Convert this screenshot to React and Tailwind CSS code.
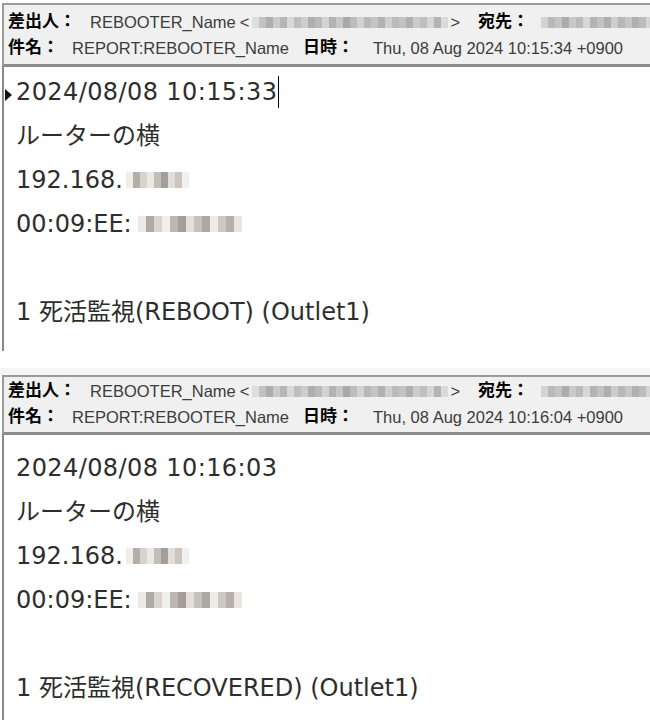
import React from 'react';

const HEAD_FONT = { fontFamily: '"Liberation Sans", "Noto Sans CJK JP", sans-serif' };
const BODY_FONT = { fontFamily: '"DejaVu Sans", "Noto Sans CJK JP", sans-serif' };

// pixelated blur blocks standing in for hidden text
function Mosaic({ shades, cell = 'w-[7px]', height = 'h-[10px]', className = '' }) {
  return (
    <span className={`inline-flex items-center ${className}`}>
      {shades.map((s, i) => (
        <span key={i} className={`${cell} ${height}`} style={{ backgroundColor: s }} />
      ))}
    </span>
  );
}

const headMask1 = ['#dedede', '#c2c2c2', '#adadad', '#cbcbcb', '#b6b6b6', '#d8d8d8', '#bebebe', '#cdcdcd', '#aeaeae', '#bababa', '#d3d3d3', '#b3b3b3', '#c7c7c7', '#a9a9a9', '#bdbdbd', '#d2d2d2', '#b8b8b8', '#c5c5c5', '#b1b1b1', '#cfcfcf', '#bbbbbb', '#c3c3c3', '#b0b0b0', '#cccccc', '#bfbfbf', '#d6d6d6', '#b4b4b4', '#dadada'];
const headMask2 = ['#d3d3d3', '#b9b9b9', '#c4c4c4', '#acacac', '#c9c9c9', '#bbbbbb', '#d7d7d7', '#b3b3b3', '#c2c2c2', '#aeaeae', '#cdcdcd', '#b7b7b7', '#c6c6c6', '#b0b0b0', '#bcbcbc', '#d5d5d5'];

function Header({ date, pad }) {
  return (
    <div className={`ml-[2px] border-t-2 border-l-2 border-b-[3px] border-b-[#8c8c8c] border-[#9a9a9a] bg-[#f0f0f0] ${pad}`} style={HEAD_FONT}>
      <div className="flex h-[26px] items-center text-[16.5px] text-[#3c3c3c]">
        <span className="w-[86px] shrink-0 pl-[4px] text-[17px] font-bold text-black">差出人：</span>
        <span>REBOOTER_Name</span>
        <span className="ml-[4px]">&lt;</span>
        <Mosaic shades={headMask1} height="h-[11px]" className="ml-[3px]" />
        <span className="ml-[2px]">&gt;</span>
        <span className="ml-[18px] w-[63px] shrink-0 text-[17px] font-bold text-black">宛先：</span>
        <Mosaic shades={headMask2} height="h-[11px]" />
      </div>
      <div className="flex h-[26px] items-center text-[16.5px] text-[#3c3c3c]">
        <span className="w-[68px] shrink-0 pl-[4px] text-[17px] font-bold text-black">件名：</span>
        <span>REPORT:REBOOTER_Name</span>
        <span className="ml-[14px] w-[70px] shrink-0 text-[17px] font-bold text-black">日時：</span>
        <span>{date}</span>
      </div>
    </div>
  );
}

const ipMask = ['#f0ede9', '#b3aea8', '#d6d2cd', '#ece8e3', '#c2bdb7', '#a39e99', '#e1ddd8', '#cac5bf', '#f2f0ed'];
const macMask = ['#ece9e6', '#aea9a3', '#d8d4d0', '#f1efec', '#bcb7b1', '#a39e98', '#e3e0db', '#c4c0bb', '#ada8a2', '#eeebe8', '#cdc8c3', '#b6b1ab', '#e8e5e1'];

function Body({ time, status, cursor, pad }) {
  return (
    <div className={`relative ml-[2px] border-l-2 border-[#888888] pl-[12px] text-[24px] leading-[44px] text-[#2e2e2e] ${pad}`} style={BODY_FONT}>
      {cursor && (
        <svg className="absolute left-[1px] top-[22px]" width="7" height="12" viewBox="0 0 7 12">
          <path d="M0 0 L7 6 L0 12 Z" fill="#111" />
        </svg>
      )}
      <div className="flex items-center">
        <span className="tracking-[0.4px]">{time}</span>
        {cursor && <span className="ml-[1px] h-[32px] w-[1px] bg-black" />}
      </div>
      <div>ルーターの横</div>
      <div className="flex items-center">
        <span>192.168.</span>
        <Mosaic shades={ipMask} cell="w-[7px]" height="h-[16px]" className="ml-[3px]" />
      </div>
      <div className="flex items-center">
        <span>00:09:EE:</span>
        <Mosaic shades={macMask} cell="w-[8px]" height="h-[16px]" className="ml-[6px]" />
      </div>
      <div>&nbsp;</div>
      <div>1 死活監視({status}) (Outlet1)</div>
    </div>
  );
}

export default function App() {
  return (
    <div className="h-[727px] w-[650px] overflow-hidden bg-white">
      <div className="pt-[3px]">
        <Header date="Thu, 08 Aug 2024 10:15:34 +0900" pad="pt-[4px] pb-[3px]" />
        <Body time="2024/08/08 10:15:33" status="REBOOT" cursor pad="pt-[3px] pb-[17px]" />
      </div>
      <div className="mt-[17px]">
        <div className="h-[7px] bg-[#f6f6f6]" />
        <Header date="Thu, 08 Aug 2024 10:16:04 +0900" pad="pt-[1px] pb-[2px]" />
        <Body time="2024/08/08 10:16:03" status="RECOVERED" pad="pt-[11px] pb-[10px]" />
      </div>
    </div>
  );
}
